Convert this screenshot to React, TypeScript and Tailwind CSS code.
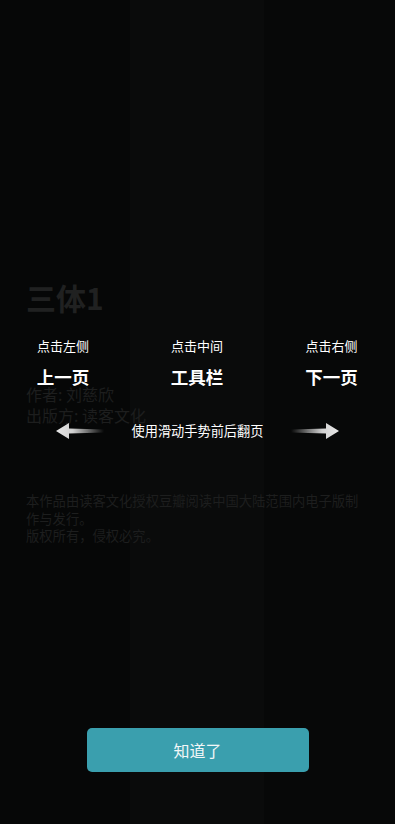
const cjk = { fontFamily: '"Noto Sans CJK SC", "Noto Sans", sans-serif' };

function Arrow({ dir }: { dir: "left" | "right" }) {
  const id = `fade-${dir}`;
  return (
    <svg width="50" height="18" viewBox="0 0 50 18" className={dir === "right" ? "-scale-x-100" : ""}>
      <defs>
        <linearGradient id={id} x1="0" x2="1" y1="0" y2="0">
          <stop offset="0" stopColor="#e8e8e8" />
          <stop offset="0.35" stopColor="#d0d0d0" />
          <stop offset="1" stopColor="#d0d0d0" stopOpacity="0" />
        </linearGradient>
      </defs>
      <path d="M1 9 L14 1 L14 6.5 L49 7.5 L49 10.5 L14 11.5 L14 17 Z" fill={`url(#${id})`} strokeLinejoin="round" />
    </svg>
  );
}

const columns = [
  { hint: "点击左侧", action: "上一页", bg: "bg-[#060707]", pad: "pr-[4px]" },
  { hint: "点击中间", action: "工具栏", bg: "bg-[#0a0b0b]", pad: "" },
  { hint: "点击右侧", action: "下一页", bg: "bg-[#070808]", pad: "pl-[4px]" },
];

export default function App() {
  return (
    <div className="relative h-[824px] w-full overflow-hidden bg-[#070808]" style={cjk}>
      <div className="absolute inset-0 grid grid-cols-[130px_134px_1fr]">
        {columns.map((c) => (
          <div key={c.hint} className={c.bg} />
        ))}
      </div>

      {/* dimmed book page underneath */}
      <div className="relative px-[26px] pt-[278px] text-[#1d1e1e]">
        <h1 className="text-[30px] font-bold leading-[38px] text-[#202121]">三体1</h1>
        <div className="mt-[68px] text-[16px] leading-[21px]">
          <p>作者: 刘慈欣</p>
          <p>出版方: 读客文化</p>
        </div>
        <div className="mt-[66px] text-[13.3px] leading-[17.5px]">
          <p>本作品由读客文化授权豆瓣阅读中国大陆范围内电子版制作与发行。</p>
          <p>版权所有，侵权必究。</p>
        </div>
      </div>

      {/* guide overlay */}
      <div className="absolute inset-0 flex flex-col">
        <div className="mt-[336px] grid grid-cols-[130px_134px_1fr] text-center text-white">
          {columns.map((c) => (
            <div key={c.hint} className={`flex flex-col items-center ${c.pad}`}>
              <span className="text-[13px] leading-[20px]">{c.hint}</span>
              <span className="mt-[9px] text-[17.5px] font-bold leading-[24px]">{c.action}</span>
            </div>
          ))}
        </div>
        <div className="mt-[32px] flex items-center justify-center">
          <Arrow dir="left" />
          <span className="mx-[27px] text-[13.2px] leading-[20px] text-white">使用滑动手势前后翻页</span>
          <Arrow dir="right" />
        </div>
        <div className="mt-auto mb-[52px] flex justify-center">
          <button className="h-[44px] w-[222px] rounded-[5px] bg-[#3a9fae] text-[16px] text-[#f2f6f7]">知道了</button>
        </div>
      </div>
    </div>
  );
}
